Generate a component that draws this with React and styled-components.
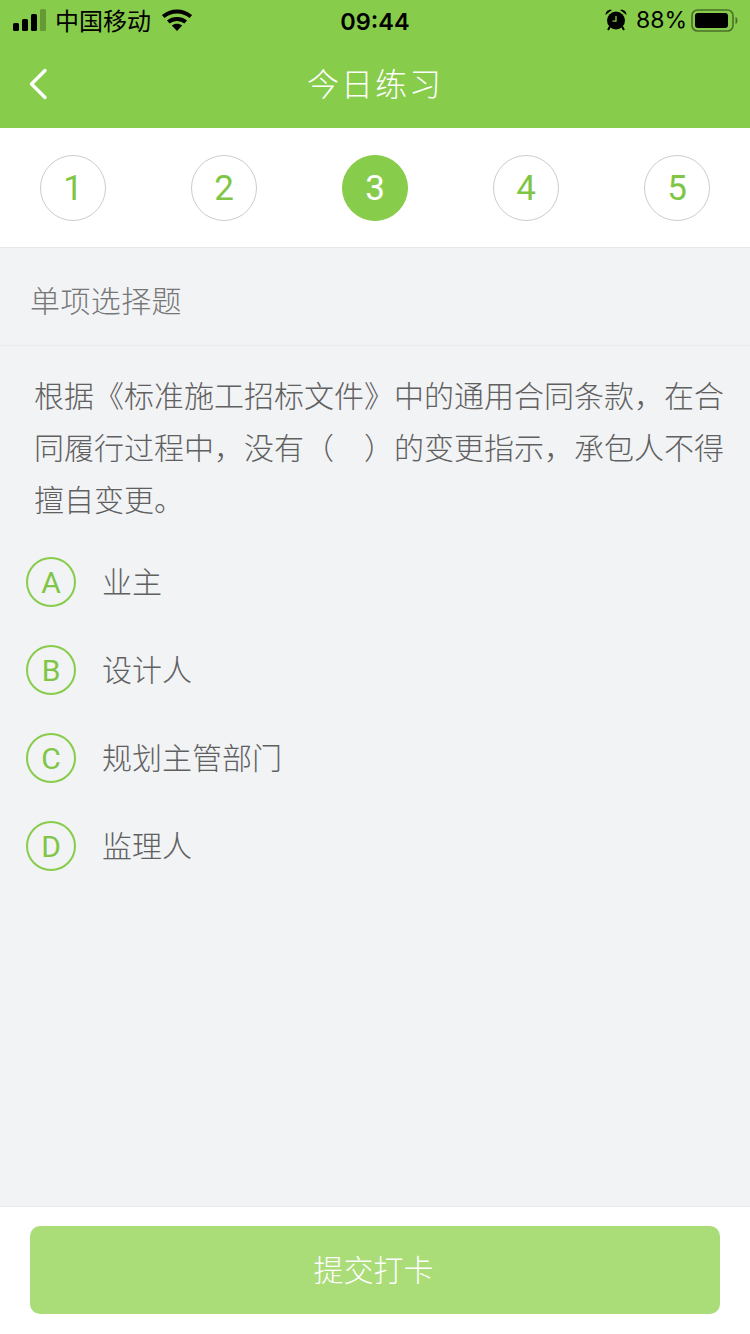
import React from "react";
import styled, { createGlobalStyle } from "styled-components";

const GlobalStyle = createGlobalStyle`
  html, body {
    margin: 0;
    padding: 0;
    background: #f2f3f5;
  }
  * {
    box-sizing: border-box;
  }
`;

const steps = [1, 2, 3, 4, 5];
const options = [
  { letter: "A", text: "业主" },
  { letter: "B", text: "设计人" },
  { letter: "C", text: "规划主管部门" },
  { letter: "D", text: "监理人" },
];

const App = () => {
  return (
    <Page>
      <GlobalStyle />
      <Header>
        <StatusBar>
          <StatusLeft>
            <SignalIcon />
            <Carrier>中国移动</Carrier>
            <WifiIcon />
          </StatusLeft>
          <Clock>09:44</Clock>
          <StatusRight>
            <AlarmIcon />
            <Percent>88%</Percent>
            <BatteryIcon />
          </StatusRight>
        </StatusBar>
        <NavBar>
          <BackButton>
            <svg width="20" height="32" viewBox="0 0 20 32" fill="none">
              <path
                d="M17 2.5 L3.5 16 L17 29.5"
                stroke="#fff"
                strokeWidth="3.4"
                strokeLinecap="round"
                strokeLinejoin="round"
              />
            </svg>
          </BackButton>
          <Title>今日练习</Title>
        </NavBar>
      </Header>

      <Steps>
        {steps.map((n) => (
          <Step key={n} active={n === 3}>
            {n}
          </Step>
        ))}
      </Steps>

      <Main>
        <SectionTitle>单项选择题</SectionTitle>
        <Question>
          根据《标准施工招标文件》中的通用合同条款，在合同履行过程中，没有（　）的变更指示，承包人不得擅自变更。
        </Question>
        <OptionList>
          {options.map((o) => (
            <Option key={o.letter}>
              <OptionBadge>{o.letter}</OptionBadge>
              <OptionText>{o.text}</OptionText>
            </Option>
          ))}
        </OptionList>
      </Main>

      <Footer>
        <SubmitButton>提交打卡</SubmitButton>
      </Footer>
    </Page>
  );
};

export default App;

const SignalIcon = () => (
  <svg width="34" height="22" viewBox="0 0 34 22">
    <rect x="0" y="14" width="6" height="8" rx="1.5" fill="#000" />
    <rect x="9" y="10" width="6" height="12" rx="1.5" fill="#000" />
    <rect x="18" y="5" width="6" height="17" rx="1.5" fill="#000" />
    <rect x="27" y="0" width="6" height="22" rx="1.5" fill="#000" opacity="0.25" />
  </svg>
);

const WifiIcon = () => (
  <svg width="30" height="22" viewBox="0 0 30 22" fill="none">
    <path d="M1.3 7.6 C9 0.8 21 0.8 28.7 7.6" stroke="#000" strokeWidth="4" />
    <path d="M6.3 13 C11 9 19 9 23.7 13" stroke="#000" strokeWidth="4" />
    <path d="M9.8 16.6 C13 14.2 17 14.2 20.2 16.6 L15 22 Z" fill="#000" />
  </svg>
);

const AlarmIcon = () => (
  <svg width="22" height="22" viewBox="0 0 22 22">
    <circle cx="11" cy="11.5" r="9" fill="#000" />
    <path d="M0.5 6 C0.5 2.5 3.5 0 7 1 Z" fill="#000" />
    <path d="M21.5 6 C21.5 2.5 18.5 0 15 1 Z" fill="#000" />
    <path d="M5 17.5 L3 21 M17 17.5 L19 21" stroke="#000" strokeWidth="2" />
    <path d="M11 7 V12.2 H7.5" stroke="#87cc4a" strokeWidth="1.3" fill="none" />
  </svg>
);

const BatteryIcon = () => (
  <svg width="47" height="23" viewBox="0 0 47 23">
    <rect
      x="1"
      y="1"
      width="41"
      height="21"
      rx="5.5"
      fill="none"
      stroke="#000"
      strokeOpacity="0.45"
      strokeWidth="1.6"
    />
    <rect x="4" y="4" width="33" height="15" rx="3" fill="#000" />
    <path d="M44.5 8 C46 8.5 46.5 10 46.5 11.5 C46.5 13 46 14.5 44.5 15 Z" fill="#000" opacity="0.45" />
  </svg>
);

const Page = styled.div`
  width: 750px;
  min-height: 1334px;
  display: flex;
  flex-direction: column;
  background: #f2f3f5;
  font-family: "Liberation Sans", "Noto Sans CJK SC", sans-serif;
`;

const Header = styled.header`
  height: 128px;
  background: #87cc4a;
  display: flex;
  flex-direction: column;
`;

const StatusBar = styled.div`
  height: 40px;
  padding: 0 12px 0 13px;
  display: flex;
  align-items: center;
  justify-content: space-between;
  position: relative;
  color: #000;
`;

const StatusLeft = styled.div`
  display: flex;
  align-items: center;
`;

const Carrier = styled.span`
  font-size: 24px;
  margin: 0 11px 0 8px;
  padding-bottom: 2px;
  font-family: "Noto Sans CJK SC", sans-serif;
`;

const Clock = styled.span`
  position: absolute;
  left: 0;
  right: 0;
  padding-top: 2px;
  text-align: center;
  font-size: 23.5px;
  font-weight: 600;
  font-family: "Inter", "Liberation Sans", sans-serif;
  pointer-events: none;
`;

const StatusRight = styled.div`
  display: flex;
  align-items: center;
`;

const Percent = styled.span`
  font-size: 23px;
  margin: 0 4px 0 9px;
  font-family: "Inter", "Liberation Sans", sans-serif;
  font-weight: 400;
`;

const NavBar = styled.div`
  flex: 1;
  position: relative;
  display: flex;
  align-items: center;
  justify-content: center;
`;

const BackButton = styled.div`
  position: absolute;
  left: 28px;
  top: 28px;
  width: 20px;
  height: 32px;
  display: flex;
`;

const Title = styled.h1`
  margin: 0 0 4px;
  color: #fff;
  font-size: 32px;
  font-weight: 300;
  font-family: "Noto Sans CJK SC", sans-serif;
  line-height: 44px;
  letter-spacing: 2px;
`;

const Steps = styled.div`
  height: 120px;
  padding: 27px 40px 0;
  background: #fff;
  border-bottom: 1px solid #e8e8e8;
  display: flex;
  justify-content: space-between;
`;

const Step = styled.div`
  width: 66px;
  height: 66px;
  border-radius: 50%;
  border: 1px solid ${(props) => (props.active ? "#87cc4a" : "#cccccc")};
  background: ${(props) => (props.active ? "#87cc4a" : "#fff")};
  color: ${(props) => (props.active ? "#fff" : "#80c646")};
  font-size: 35px;
  font-family: "Roboto", "Liberation Sans", sans-serif;
  font-weight: 400;
  display: flex;
  align-items: center;
  justify-content: center;
`;

const Main = styled.main`
  flex: 1;
  display: flex;
  flex-direction: column;
  font-family: "Noto Sans CJK SC", sans-serif;
`;

const SectionTitle = styled.div`
  height: 98px;
  padding-left: 30px;
  border-bottom: 1px solid #eaebed;
  color: #777;
  font-size: 30px;
  letter-spacing: 0.4px;
  font-weight: 300;
  line-height: 102px;
`;

const Question = styled.p`
  margin: 0;
  padding: 22px 26px 0 34px;
  color: #606060;
  font-size: 30px;
  font-weight: 300;
  line-height: 52px;
`;

const OptionList = styled.div`
  padding: 33px 0 0 26px;
  display: flex;
  flex-direction: column;
  gap: 38px;
`;

const Option = styled.div`
  display: flex;
  align-items: center;
  height: 50px;
`;

const OptionBadge = styled.div`
  width: 50px;
  height: 50px;
  border-radius: 50%;
  border: 2px solid #87cc4a;
  color: #80c646;
  font-size: 30px;
  font-family: "Roboto", "Liberation Sans", sans-serif;
  font-weight: 400;
  display: flex;
  align-items: center;
  justify-content: center;
`;

const OptionText = styled.span`
  margin-left: 26px;
  padding-bottom: 4px;
  color: #606060;
  font-size: 30px;
  font-weight: 300;
`;

const Footer = styled.footer`
  height: 128px;
  padding: 19px 30px 20px;
  background: #fff;
  border-top: 1px solid #e8e8e8;
`;

const SubmitButton = styled.button`
  display: block;
  width: 690px;
  height: 88px;
  padding: 0 3px 4px 0;
  border: 0;
  border-radius: 10px;
  background: #aadc78;
  color: #fff;
  font-size: 30px;
  font-weight: 300;
  font-family: "Noto Sans CJK SC", sans-serif;
`;
